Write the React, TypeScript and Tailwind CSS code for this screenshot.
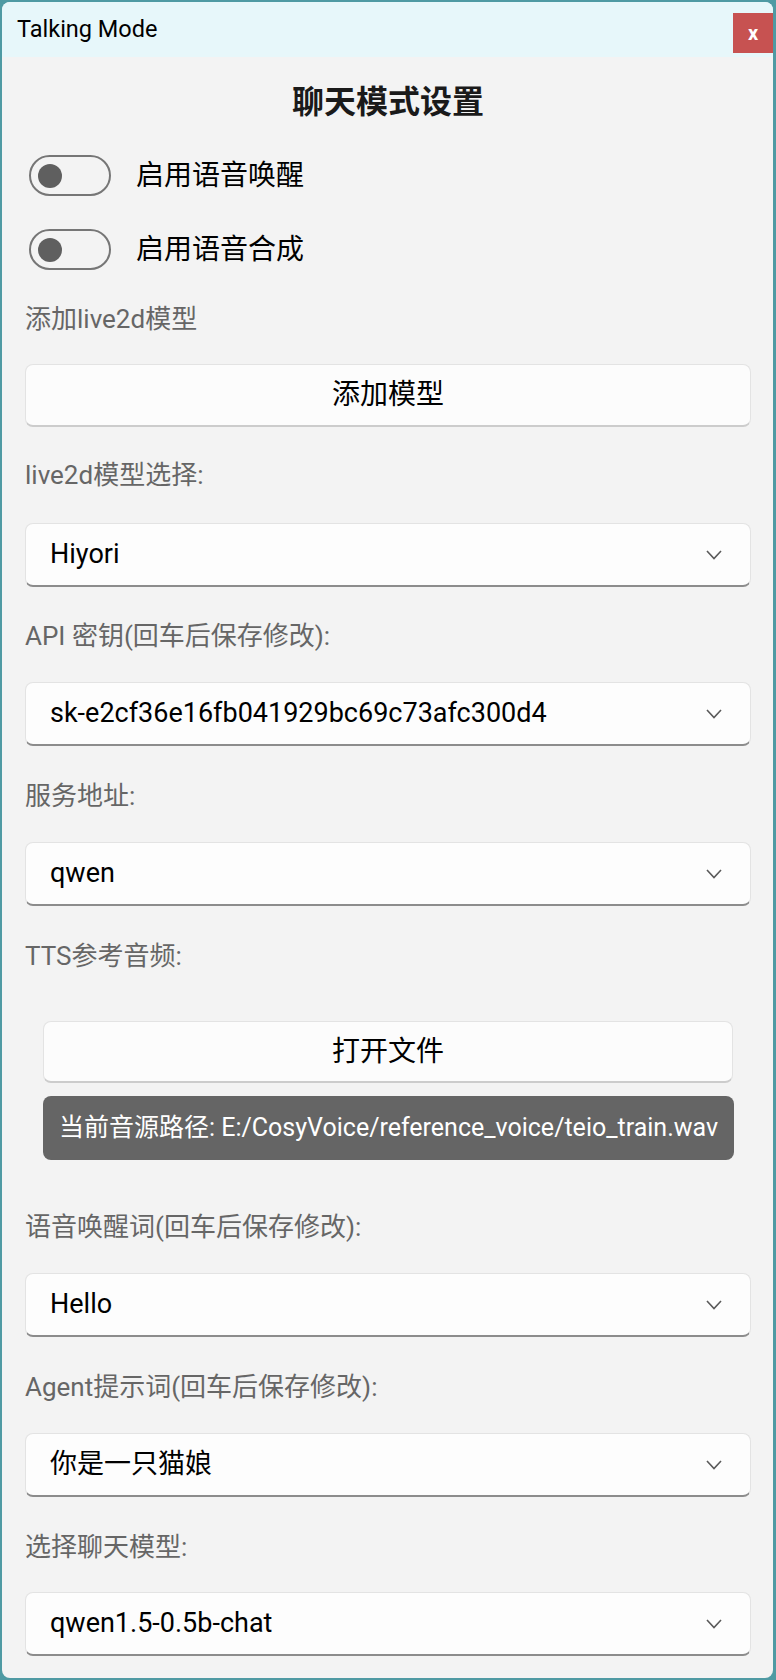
import { useState } from 'react';

const FONT = "font-['Roboto','Noto_Sans_CJK_SC',sans-serif]";

const Chevron = () => (
  <svg width="16" height="10" viewBox="0 0 16 10" fill="none">
    <polyline points="1,1 8,8.5 15,1" stroke="#5a5a5a" strokeWidth="1.6" />
  </svg>
);

const Toggle = ({ on, onClick }: { on: boolean; onClick: () => void }) => (
  <button
    onClick={onClick}
    className="flex h-[41px] w-[82px] shrink-0 items-center rounded-full border-2 border-[#767676] px-[7px]"
  >
    <span
      className={`h-[24px] w-[24px] rounded-full bg-[#5f5f5f] ${on ? 'ml-auto' : ''}`}
    />
  </button>
);

const Label = ({ text, className = '' }: { text: string; className?: string }) => (
  <div className={`flex h-[44px] items-center text-[26px] text-[#666666] ${className}`}>
    {text}
  </div>
);

const Select = ({ value, className = '' }: { value: string; className?: string }) => (
  <div
    className={`flex h-[64px] items-center justify-between rounded-[8px] border border-b-2 border-[#e3e3e3] border-b-[#8c8c8c] bg-[#fdfdfd] pr-[28px] pl-[24px] text-[27px] text-black ${className}`}
  >
    <span>{value}</span>
    <Chevron />
  </div>
);

export default function App() {
  const [wake, setWake] = useState(false);
  const [tts, setTts] = useState(false);

  return (
    <div className={`h-[1680px] w-[776px] bg-[#4f9aa3] pt-[2px] pr-[3px] pb-[2px] pl-[2px] ${FONT}`}>
      <div className="flex h-[1676px] flex-col overflow-hidden rounded-[8px] bg-[#f3f3f3]">
        {/* title bar */}
        <div className="flex h-[55px] shrink-0 items-start justify-between bg-[#e7f7fa]">
          <span className="mt-[13px] pl-[15px] text-[23.5px] leading-[28px] text-black">
            Talking Mode
          </span>
          <button className="mt-[11px] flex h-[40px] w-[40px] items-center justify-center bg-[#c75251] text-[20px] font-bold text-white">
            x
          </button>
        </div>

        <div className="flex flex-col pr-[22px] pl-[23px]">
          <h1 className="mt-[22px] flex h-[46px] items-center justify-center text-[32px] font-bold text-[#1a1a1a]">
            聊天模式设置
          </h1>

          <div className="mt-[30px] flex h-[41px] items-center gap-[25px] pl-[4px]">
            <Toggle on={wake} onClick={() => setWake(!wake)} />
            <span className="text-[28px] text-black">启用语音唤醒</span>
          </div>
          <div className="mt-[33px] flex h-[41px] items-center gap-[25px] pl-[4px]">
            <Toggle on={tts} onClick={() => setTts(!tts)} />
            <span className="text-[28px] text-black">启用语音合成</span>
          </div>

          <Label text="添加live2d模型" className="mt-[27px]" />
          <button className="mt-[23px] h-[63px] rounded-[8px] border border-b-2 border-[#e3e3e3] border-b-[#cccccc] bg-[#fcfcfc] text-[28px] text-black">
            添加模型
          </button>

          <Label text="live2d模型选择:" className="mt-[26px]" />
          <Select value="Hiyori" className="mt-[26px]" />

          <Label text="API 密钥(回车后保存修改):" className="mt-[27px]" />
          <Select value="sk-e2cf36e16fb041929bc69c73afc300d4" className="mt-[24px]" />

          <Label text="服务地址:" className="mt-[28px]" />
          <Select value="qwen" className="mt-[24px]" />

          <Label text="TTS参考音频:" className="mt-[28px]" />
          <button className="mx-[18px] mt-[43px] h-[62px] rounded-[8px] border border-b-2 border-[#e3e3e3] border-b-[#cccccc] bg-[#fcfcfc] text-[28px] text-black">
            打开文件
          </button>
          <div className="mt-[13px] mr-[17px] ml-[18px] flex h-[64px] items-center rounded-[8px] bg-[#656565] pl-[16px] text-[25px] text-white">
            当前音源路径: E:/CosyVoice/reference_voice/teio_train.wav
          </div>

          <Label text="语音唤醒词(回车后保存修改):" className="mt-[45px]" />
          <Select value="Hello" className="mt-[24px]" />

          <Label text="Agent提示词(回车后保存修改):" className="mt-[28px]" />
          <Select value="你是一只猫娘" className="mt-[24px]" />

          <Label text="选择聊天模型:" className="mt-[28px]" />
          <Select value="qwen1.5-0.5b-chat" className="mt-[23px]" />
        </div>
      </div>
    </div>
  );
}
